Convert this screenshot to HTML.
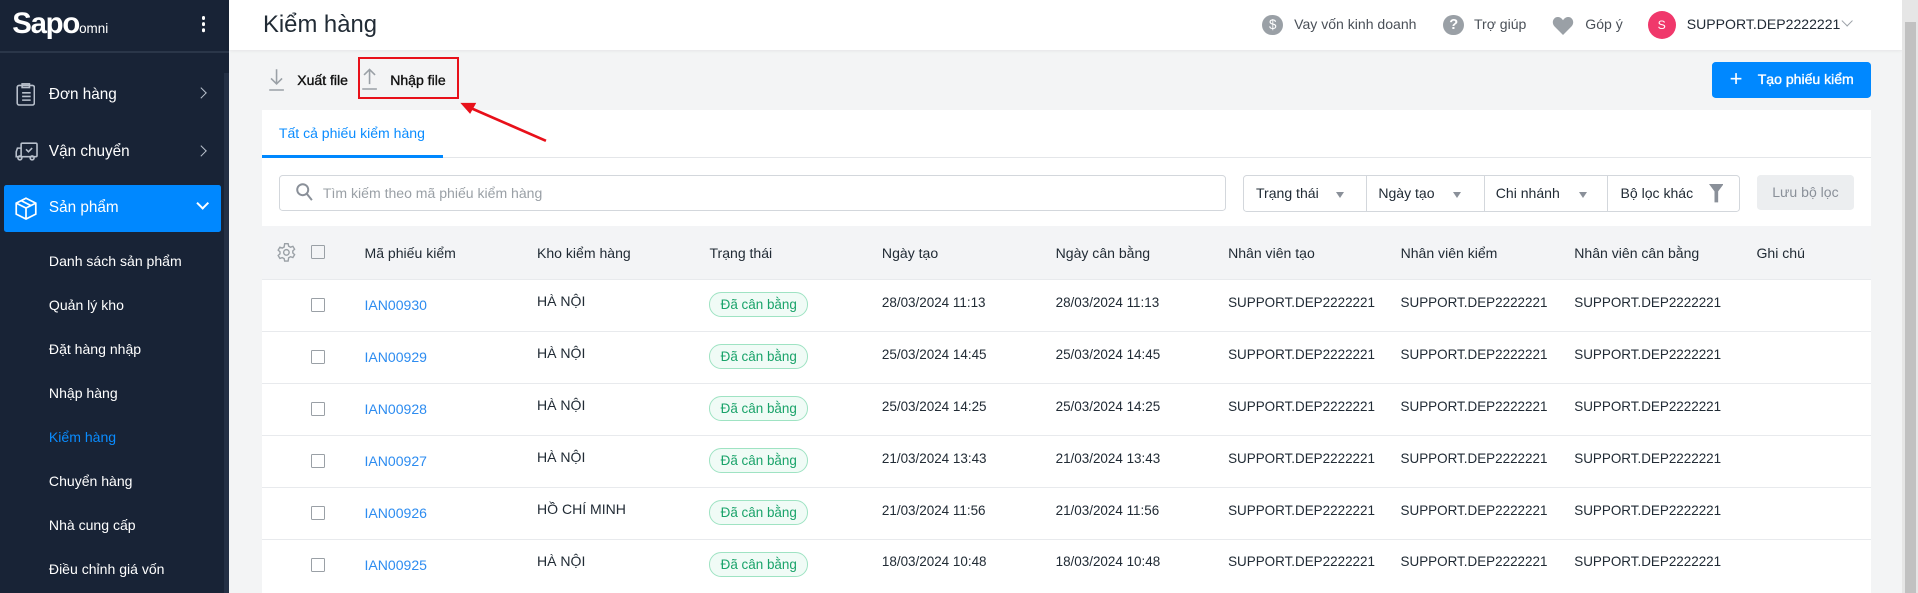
<!DOCTYPE html>
<html><head><meta charset="utf-8">
<style>
html,body{margin:0;padding:0;}
body{width:1918px;height:593px;overflow:hidden;background:#f3f4f5;font-family:"Liberation Sans",sans-serif;}
#w{zoom:1.2232;width:1568px;height:485px;position:relative;overflow:hidden;color:#212b35;font-size:11.5px;}
.a{position:absolute;white-space:nowrap;}
#side{position:absolute;left:0;top:0;width:187px;height:485px;background:#182336;}
#side .sb{position:absolute;left:183px;top:60px;width:4px;height:425px;background:#243045;}
.mi{color:#fff;font-size:12.5px;}
.sub{color:#fff;font-size:11.5px;left:40px;}
#hdr{position:absolute;left:187px;top:0;width:1368px;height:41px;background:#fff;box-shadow:0 1px 3px rgba(0,0,0,.08);}
.th{font-size:11.5px;color:#212b35;top:200px;}
.row{position:absolute;left:214px;width:1316px;height:42px;background:#fff;border-top:1px solid #e8eaed;}
.cb{position:absolute;width:10px;height:10px;border:1.5px solid #9aa0a6;border-radius:1px;}
.badge{position:absolute;left:366px;width:79px;height:19px;border:1px solid #9fe3c3;background:#f0fbf6;color:#1aa36a;border-radius:10px;font-size:11px;text-align:center;line-height:19px;}
.dd{position:absolute;top:143px;height:29px;border:1px solid #d3d7dc;background:#fff;font-size:11.5px;line-height:29px;}
.tri{position:absolute;top:13px;width:0;height:0;border-left:4px solid transparent;border-right:4px solid transparent;border-top:5px solid #8a9099;}
</style></head><body><div id="w">
<div id="side">
  <div class="a" style="left:10px;top:6px;color:#fff;font-size:24px;font-weight:bold;letter-spacing:-1px;">Sapo<span style="font-size:11px;font-weight:normal;letter-spacing:0">omni</span></div>
  <div class="a" style="left:165px;top:13px;width:3px;height:3px;background:#fff;border-radius:50%;box-shadow:0 5px 0 #fff,0 10px 0 #fff;"></div>
  <div style="position:absolute;left:0;top:42px;width:187px;height:1px;background:#2a3649;"></div>
  <div class="sb"></div>
  <svg class="a" style="left:13px;top:68px" width="16" height="19" viewBox="0 0 16 19" fill="none" stroke="#b8c0cc" stroke-width="1.3"><rect x="1" y="2" width="14" height="16" rx="1.5"/><rect x="5" y="0.7" width="6" height="3"/><path d="M5 8h7M5 11h7M5 14h7"/></svg>
  <div class="a mi" style="left:40px;top:70px">Đơn hàng</div>
  <div class="a" style="left:161px;top:73px;width:6px;height:6px;border-right:1.5px solid #b8c0cc;border-top:1.5px solid #b8c0cc;transform:rotate(45deg)"></div>
  <svg class="a" style="left:12px;top:116px" width="19" height="16" viewBox="0 0 19 16" fill="none" stroke="#b8c0cc" stroke-width="1.3"><rect x="5" y="1" width="13" height="11" rx="1"/><path d="M5 5H2L1 8v4h4"/><circle cx="4" cy="13" r="1.6"/><circle cx="14" cy="13" r="1.6"/><path d="M9 6l2 2 3-3"/></svg>
  <div class="a mi" style="left:40px;top:117px">Vận chuyển</div>
  <div class="a" style="left:161px;top:120px;width:6px;height:6px;border-right:1.5px solid #b8c0cc;border-top:1.5px solid #b8c0cc;transform:rotate(45deg)"></div>
  <div class="a" style="left:3px;top:151px;width:178px;height:39px;background:#0088ff;border-radius:2px;"></div>
  <svg class="a" style="left:12px;top:161px" width="18" height="19" viewBox="0 0 18 19" fill="none" stroke="#fff" stroke-width="1.4"><path d="M9 1l8 4v9l-8 4-8-4V5z"/><path d="M1 5l8 4 8-4M9 9v9M5 3l8 4"/></svg>
  <div class="a mi" style="left:40px;top:163px">Sản phẩm</div>
  <div class="a" style="left:162px;top:163px;width:6px;height:6px;border-right:1.8px solid #fff;border-bottom:1.8px solid #fff;transform:rotate(45deg)"></div>
  <div class="a sub" style="top:207px">Danh sách sản phẩm</div>
  <div class="a sub" style="top:243px">Quản lý kho</div>
  <div class="a sub" style="top:279px">Đặt hàng nhập</div>
  <div class="a sub" style="top:315px">Nhập hàng</div>
  <div class="a sub" style="top:351px;color:#0a8cff">Kiểm hàng</div>
  <div class="a sub" style="top:387px">Chuyển hàng</div>
  <div class="a sub" style="top:423px">Nhà cung cấp</div>
  <div class="a sub" style="top:459px">Điều chỉnh giá vốn</div>
</div>
<div id="hdr"></div>
<div style="position:absolute;left:1555px;top:0;width:13px;height:485px;background:#e6e6e6"></div>
<div style="position:absolute;left:1557px;top:18px;width:9px;height:467px;background:#c1c1c1"></div>
<div class="a" style="left:215px;top:9px;font-size:19.5px;color:#212b35">Kiểm hàng</div>
<div class="a" style="left:1032px;top:12px;width:17px;height:17px;border-radius:50%;background:#9aa0a6;color:#fff;font-size:11px;text-align:center;line-height:17px">$</div>
<div class="a" style="left:1058px;top:13px;color:#4a5058">Vay vốn kinh doanh</div>
<div class="a" style="left:1180px;top:12px;width:17px;height:17px;border-radius:50%;background:#9aa0a6;color:#fff;font-size:12px;font-weight:bold;text-align:center;line-height:17px">?</div>
<div class="a" style="left:1205px;top:13px;color:#4a5058">Trợ giúp</div>
<svg class="a" style="left:1269px;top:13px" width="18" height="16" viewBox="0 0 18 16"><path d="M9 15.5L2 8.5C-1 5 1.5 0.5 5 0.8 7 1 8.3 2.3 9 3.5 9.7 2.3 11 1 13 0.8 16.5 0.5 19 5 16 8.5z" fill="#9aa0a6"/></svg>
<div class="a" style="left:1296px;top:13px;color:#4a5058">Góp ý</div>
<div class="a" style="left:1347px;top:9px;width:23px;height:23px;border-radius:50%;background:#f0386b;color:#fff;font-size:10px;text-align:center;line-height:23px">S</div>
<div class="a" style="left:1379px;top:13px;color:#212b35;font-size:11.5px">SUPPORT.DEP2222221</div>
<div class="a" style="left:1507px;top:14px;width:6px;height:6px;border-right:1px solid #9aa0a6;border-bottom:1px solid #9aa0a6;transform:rotate(45deg)"></div>

<svg class="a" style="left:219px;top:56px" width="14" height="19" viewBox="0 0 14 19" fill="none" stroke="#9aa0a6" stroke-width="1.3"><path d="M7 1v12M2.5 8.5L7 13l4.5-4.5M1 18h12"/></svg>
<div class="a" style="left:243px;top:59px;font-size:11.5px;color:#111;-webkit-text-stroke:0.3px #111">Xuất file</div>
<svg class="a" style="left:295px;top:55px" width="14" height="19" viewBox="0 0 14 19" fill="none" stroke="#9aa0a6" stroke-width="1.3"><path d="M7 14V2M2.5 6.5L7 2l4.5 4.5M1 18h12"/></svg>
<div class="a" style="left:319px;top:59px;font-size:11.5px;color:#111;-webkit-text-stroke:0.3px #111">Nhập file</div>
<div class="a" style="left:293px;top:47px;width:79px;height:31px;border:2px solid #e8101a"></div>

<div class="a" style="left:1400px;top:51px;width:130px;height:29px;background:#0088ff;border-radius:3px;color:#fff;line-height:29px;font-size:11.5px;-webkit-text-stroke:0.3px #fff"><span style="font-size:18px;font-weight:normal;position:absolute;left:14px;top:-1px;-webkit-text-stroke:0">+</span><span style="position:absolute;left:37px">Tạo phiếu kiểm</span></div>

<div style="position:absolute;left:214px;top:90px;width:1316px;height:400px;background:#fff"></div>
<svg class="a" style="left:370px;top:80px" width="80" height="40" viewBox="0 0 80 40"><path d="M76 35L14 8" stroke="#e8101a" stroke-width="2.2"/><path d="M6 4L19 4 14 13z" fill="#e8101a"/></svg>
<div class="a" style="left:228px;top:102px;color:#0a8cff;font-size:11.5px">Tất cả phiếu kiểm hàng</div>
<div style="position:absolute;left:214px;top:128px;width:1316px;height:1px;background:#e4e6e9"></div>
<div style="position:absolute;left:214px;top:127px;width:148px;height:2px;background:#0088ff"></div>

<div style="position:absolute;left:228px;top:143px;width:773px;height:28px;border:1px solid #d3d7dc;border-radius:3px;background:#fff"></div>
<svg class="a" style="left:242px;top:150px" width="14" height="15" viewBox="0 0 14 15" fill="none" stroke="#8a9099" stroke-width="1.6"><circle cx="5.5" cy="5.5" r="4.5"/><path d="M9 9l4 5"/></svg>
<div class="a" style="left:264px;top:151px;color:#9aa0a6;font-size:11.5px">Tìm kiếm theo mã phiếu kiểm hàng</div>
<div class="dd" style="left:1016px;width:100px;border-radius:3px 0 0 3px"><span style="margin-left:10px">Trạng thái</span><div class="tri" style="left:75px"></div></div>
<div class="dd" style="left:1117px;width:96px"><span style="margin-left:9px">Ngày tạo</span><div class="tri" style="left:70px"></div></div>
<div class="dd" style="left:1213px;width:101px"><span style="margin-left:9px">Chi nhánh</span><div class="tri" style="left:77px"></div></div>
<div class="dd" style="left:1314px;width:107px;border-radius:0 3px 3px 0"><span style="margin-left:10px">Bộ lọc khác</span>
<svg style="position:absolute;left:82px;top:7px" width="12" height="15" viewBox="0 0 12 15"><path d="M0 0h12L7.5 6v9h-3V6z" fill="#8a9099"/></svg></div>
<div class="a" style="left:1436px;top:143px;width:80px;height:29px;background:#eceef0;border-radius:3px;color:#8a9099;text-align:center;line-height:29px">Lưu bộ lọc</div>

<div style="position:absolute;left:214px;top:185px;width:1316px;height:43px;background:#f3f4f6;border-bottom:1px solid #e4e6e9"></div>
<svg class="a" style="left:226px;top:198px" width="17" height="17" viewBox="0 0 24 24" fill="none" stroke="#9aa0a6" stroke-width="1.6"><circle cx="12" cy="12" r="3.2"/><path d="M10 2h4l.6 2.8 2.2 1.2 2.7-1 2 3.4-2.1 1.9v2.4l2.1 1.9-2 3.4-2.7-1-2.2 1.2L14 22h-4l-.6-2.8-2.2-1.2-2.7 1-2-3.4 2.1-1.9v-2.4L2.5 9.4l2-3.4 2.7 1 2.2-1.2z"/></svg>
<div class="cb" style="left:254px;top:200px"></div>
<div class="a th" style="left:298px">Mã phiếu kiểm</div>
<div class="a th" style="left:439px">Kho kiểm hàng</div>
<div class="a th" style="left:580px">Trạng thái</div>
<div class="a th" style="left:721px">Ngày tạo</div>
<div class="a th" style="left:863px">Ngày cân bằng</div>
<div class="a th" style="left:1004px">Nhân viên tạo</div>
<div class="a th" style="left:1145px">Nhân viên kiểm</div>
<div class="a th" style="left:1287px">Nhân viên cân bằng</div>
<div class="a th" style="left:1436px">Ghi chú</div>

<div id="rows"></div>
<script>
var d=[["IAN00930","HÀ NỘI","28/03/2024 11:13","28/03/2024 11:13"],["IAN00929","HÀ NỘI","25/03/2024 14:45","25/03/2024 14:45"],["IAN00928","HÀ NỘI","25/03/2024 14:25","25/03/2024 14:25"],["IAN00927","HÀ NỘI","21/03/2024 13:43","21/03/2024 13:43"],["IAN00926","HỒ CHÍ MINH","21/03/2024 11:56","21/03/2024 11:56"],["IAN00925","HÀ NỘI","18/03/2024 10:48","18/03/2024 10:48"]];
var h="";
d.forEach(function(r,i){var t=228+i*42.5;
h+='<div class="row" style="top:'+t+'px"><div class="cb" style="left:40px;top:15px"></div>'+
'<div class="a" style="left:84px;top:14px;color:#2d8cf0">'+r[0]+'</div>'+
'<div class="a" style="left:225px;top:11px">'+r[1]+'</div>'+
'<div class="badge" style="top:10px">Đã cân bằng</div>'+
'<div class="a" style="left:507px;top:12px;font-size:11px">'+r[2]+'</div>'+
'<div class="a" style="left:649px;top:12px;font-size:11px">'+r[3]+'</div>'+
'<div class="a" style="left:790px;top:12px;font-size:11px">SUPPORT.DEP2222221</div>'+
'<div class="a" style="left:931px;top:12px;font-size:11px">SUPPORT.DEP2222221</div>'+
'<div class="a" style="left:1073px;top:12px;font-size:11px">SUPPORT.DEP2222221</div></div>';});
document.getElementById("rows").innerHTML=h;
</script>
</div></body></html>
